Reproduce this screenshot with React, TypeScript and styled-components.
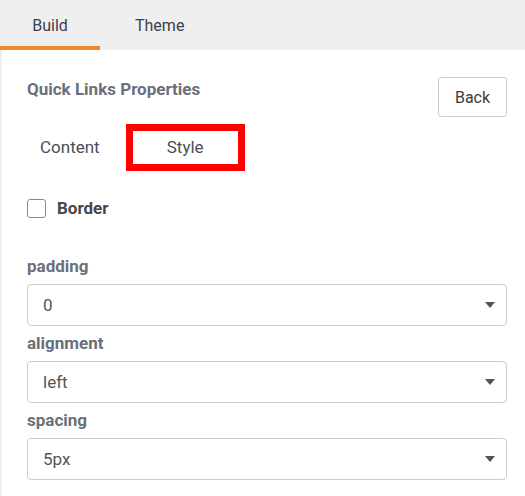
import React, { FC, ReactElement, useState } from 'react';
import styled, { createGlobalStyle } from 'styled-components';

const GlobalStyle = createGlobalStyle`
    body {
        margin: 0;
        background: #ffffff;
        font-family: Roboto, "Liberation Sans", sans-serif;
    }
`

const TabBar = styled.div`
    display: flex;
    gap: 3px;
    height: 50px;
    background: #efefef;
`

const TopTab = styled.button<{ $active?: boolean }>`
    border: none;
    background: transparent;
    padding: 0 32px;
    min-width: 100px;
    height: 50px;
    font-family: inherit;
    font-size: 16px;
    color: #3b3f4d;
    border-bottom: 4px solid ${p => p.$active ? '#f7852a' : 'transparent'};
    padding-top: 4px;
    cursor: pointer;
`

const Panel = styled.div`
    border-left: 2px solid #efefef;
    padding: 0 18px 16px 25px;
    min-height: 446px;
    box-sizing: border-box;
`

const Header = styled.div`
    display: flex;
    justify-content: space-between;
    align-items: flex-start;
    padding-top: 27px;
`

const Title = styled.div`
    font-size: 17px;
    font-weight: 700;
    color: #6b6f7b;
    margin-top: 2px;
`

const BackButton = styled.button`
    width: 69px;
    height: 40px;
    border: 1px solid #cccccc;
    border-radius: 3px;
    background: #ffffff;
    font-family: inherit;
    font-size: 16px;
    color: #3b3b3b;
    cursor: pointer;
`

const SubTabs = styled.div`
    display: flex;
    gap: 13px;
    margin-top: 7px;
`

const SubTab = styled.button<{ $active?: boolean }>`
    height: 47px;
    box-sizing: border-box;
    background: #ffffff;
    font-family: inherit;
    font-size: 17px;
    color: #4a4f5c;
    border: ${p => p.$active ? '7px solid #ff0000' : 'none'};
    width: ${p => p.$active ? '119px' : 'auto'};
    padding: ${p => p.$active ? '0 0 2px' : '0 13px 2px'};
    cursor: pointer;
`

const CheckRow = styled.label`
    display: flex;
    align-items: center;
    gap: 11px;
    margin-top: 27px;
    font-size: 17px;
    font-weight: 700;
    color: #444650;
    cursor: pointer;
`

const CheckBox = styled.span<{ $checked: boolean }>`
    width: 19px;
    height: 19px;
    box-sizing: border-box;
    border: 1px solid #8a8a8a;
    border-radius: 3px;
    background: ${p => p.$checked ? '#3b82f6' : '#ffffff'};
`

const FieldLabel = styled.div<{ $first?: boolean }>`
    font-size: 17px;
    font-weight: 700;
    color: #6b6f7b;
    line-height: 20px;
    margin-top: ${p => p.$first ? '38px' : '7px'};
    margin-bottom: 8px;
`

const SelectBox = styled.div`
    display: flex;
    align-items: center;
    justify-content: space-between;
    height: 42px;
    box-sizing: border-box;
    border: 1px solid #cccccc;
    border-radius: 4px;
    padding: 0 11px 0 15px;
    font-size: 17px;
    color: #555555;
`

const Caret = styled.span`
    width: 0;
    height: 0;
    border-left: 5.5px solid transparent;
    border-right: 5.5px solid transparent;
    border-top: 6px solid #555555;
`

const fields = [
    { label: 'padding', value: '0' },
    { label: 'alignment', value: 'left' },
    { label: 'spacing', value: '5px' },
];

const App: FC = (): ReactElement => {
    const [border, setBorder] = useState<boolean>(false);

    return (
        <>
            <GlobalStyle />
            <TabBar>
                <TopTab $active>Build</TopTab>
                <TopTab>Theme</TopTab>
            </TabBar>
            <Panel>
                <Header>
                    <Title>Quick Links Properties</Title>
                    <BackButton>Back</BackButton>
                </Header>
                <SubTabs>
                    <SubTab>Content</SubTab>
                    <SubTab $active>Style</SubTab>
                </SubTabs>
                <CheckRow onClick={() => setBorder(!border)}>
                    <CheckBox $checked={border} />
                    Border
                </CheckRow>
                {fields.map((f, i) => (
                    <div key={f.label}>
                        <FieldLabel $first={i === 0}>{f.label}</FieldLabel>
                        <SelectBox>
                            {f.value}
                            <Caret />
                        </SelectBox>
                    </div>
                ))}
            </Panel>
        </>
    )
}

export default App;
